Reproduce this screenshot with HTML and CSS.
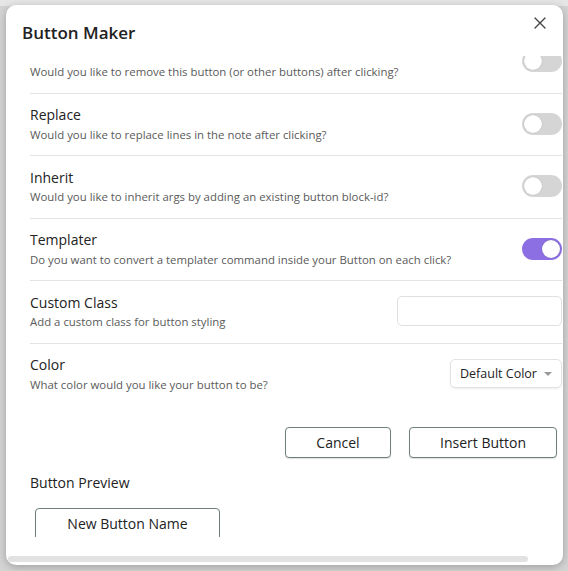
FILE: index.html
```html
<!DOCTYPE html>
<html lang="en">
<head>
<meta charset="utf-8">
<title>Button Maker</title>
<link rel="stylesheet" href="styles.css">
</head>
<body>
<div class="backdrop"></div>
<div class="modal">
  <button class="modal-close" aria-label="Close">
    <svg width="14" height="14" viewBox="0 0 14 14"><path d="M2 2 L12 12 M12 2 L2 12" stroke="#444" stroke-width="1.4" stroke-linecap="round" fill="none"/></svg>
  </button>
  <h2 class="modal-title">Button Maker</h2>
  <div class="modal-scroll">
    <div class="modal-content">
      <div class="setting-item">
        <div class="setting-info">
          <div class="setting-name"></div>
          <div class="setting-desc">Would you like to remove this button (or other buttons) after clicking?</div>
        </div>
        <div class="toggle"></div>
      </div>
      <div class="setting-item">
        <div class="setting-info">
          <div class="setting-name">Replace</div>
          <div class="setting-desc">Would you like to replace lines in the note after clicking?</div>
        </div>
        <div class="toggle"></div>
      </div>
      <div class="setting-item">
        <div class="setting-info">
          <div class="setting-name">Inherit</div>
          <div class="setting-desc">Would you like to inherit args by adding an existing button block-id?</div>
        </div>
        <div class="toggle"></div>
      </div>
      <div class="setting-item">
        <div class="setting-info">
          <div class="setting-name">Templater</div>
          <div class="setting-desc">Do you want to convert a templater command inside your Button on each click?</div>
        </div>
        <div class="toggle is-on"></div>
      </div>
      <div class="setting-item">
        <div class="setting-info">
          <div class="setting-name">Custom Class</div>
          <div class="setting-desc">Add a custom class for button styling</div>
        </div>
        <div class="text-input"></div>
      </div>
      <div class="setting-item">
        <div class="setting-info">
          <div class="setting-name">Color</div>
          <div class="setting-desc">What color would you like your button to be?</div>
        </div>
        <div class="dropdown">Default Color<span class="caret"></span></div>
      </div>
      <div class="actions">
        <button class="btn btn-cancel">Cancel</button>
        <button class="btn btn-insert">Insert Button</button>
      </div>
      <div class="preview-label">Button Preview</div>
      <div class="preview-wrap">
        <button class="btn btn-preview">New Button Name</button>
      </div>
    </div>
  </div>
  <div class="hscroll"><div class="hscroll-thumb"></div></div>
</div>
</body>
</html>
```
FILE: styles.css
```css
html, body {
  margin: 0;
  padding: 0;
}
body {
  width: 568px;
  height: 571px;
  overflow: hidden;
  background: #d9d9d9;
  font-family: "Open Sans", "Noto Sans", sans-serif;
  position: relative;
}
.backdrop {
  position: absolute;
  inset: 0;
  background: linear-gradient(#e6e6e6 0, #e6e6e6 6px, #d4d4d4 6px);
}

.modal {
  position: absolute;
  left: 6px;
  top: 5px;
  width: 557px;
  height: 560px;
  background: #fff;
  border-radius: 10px;
  box-shadow: 0 2px 8px rgba(0,0,0,0.25);
  overflow: hidden;
  display: flex;
  flex-direction: column;
}
.modal-close {
  position: absolute;
  right: 12px;
  top: 7px;
  width: 22px;
  height: 22px;
  border: 0;
  background: none;
  padding: 0;
  display: flex;
  align-items: center;
  justify-content: center;
}
.modal-title {
  margin: 0;
  padding: 17px 0 0 16px;
  height: 34px;
  font-size: 17px;
  font-weight: 600;
  line-height: 22px;
  color: #222;
}
.modal-scroll {
  height: 481px;
  overflow: hidden;
  flex: none;
}
.modal-content {
  margin-top: -26px;
  padding: 0 1px 0 24px;
}
.setting-item {
  display: flex;
  align-items: center;
  padding: 10.5px 0 11.5px;
  border-top: 1px solid #e3e3e3;
}
.setting-item:first-child {
  border-top: 1px solid transparent;
}
.setting-info {
  flex: 1;
}
.setting-name {
  font-size: 14px;
  line-height: 21px;
  height: 21px;
  color: #222;
}
.setting-desc {
  font-size: 11.4px;
  line-height: 18px;
  padding-top: 0.5px;
  color: #5a5a5a;
}
.toggle {
  width: 40px;
  height: 22px;
  border-radius: 11px;
  background: #d5d5d5;
  position: relative;
  flex: none;
}
.toggle::after {
  content: "";
  position: absolute;
  left: 2px;
  top: 2px;
  width: 18px;
  height: 18px;
  border-radius: 50%;
  background: #fff;
  box-shadow: 0 0 1px rgba(0,0,0,0.3);
}
.toggle.is-on {
  background: #8b6fe3;
}
.toggle.is-on::after {
  left: 20px;
}
.text-input {
  width: 163px;
  height: 28px;
  border: 1px solid #e0e0e0;
  border-radius: 5px;
  background: #fff;
  flex: none;
}
.dropdown {
  display: flex;
  align-items: center;
  width: 112px;
  height: 29px;
  box-sizing: border-box;
  padding-left: 9px;
  border: 1px solid #e3e3e3;
  border-radius: 5px;
  box-shadow: 0 1px 2px rgba(0,0,0,0.08);
  font-size: 12.5px;
  color: #222;
  position: relative;
  flex: none;
}
.caret {
  position: absolute;
  right: 9px;
  top: 12px;
  width: 0;
  height: 0;
  border-left: 4px solid transparent;
  border-right: 4px solid transparent;
  border-top: 4px solid #999;
}
.actions {
  display: flex;
  justify-content: flex-end;
  gap: 18px;
  padding: 22px 5px 0 0;
}
.btn {
  font-family: inherit;
  font-size: 14px;
  color: #222;
  background: #fff;
  border: 1px solid #6d8079;
  border-radius: 4px;
  height: 31px;
  padding: 0;
  box-shadow: 0 1px 1px rgba(0,0,0,0.12);
}
.btn-cancel { width: 106px; }
.btn-insert { width: 148px; }
.preview-label {
  font-size: 14px;
  line-height: 20px;
  color: #222;
  margin-top: 15px;
}
.preview-wrap {
  padding: 15px 0 0 5px;
}
.btn-preview {
  width: 183px;
  height: 30px;
  box-sizing: content-box;
  padding-bottom: 2px;
  line-height: 28px;
}
.hscroll {
  flex: none;
  height: 25px;
  position: relative;
}
.hscroll-thumb {
  position: absolute;
  left: 2px;
  top: 19px;
  width: 520px;
  height: 6px;
  border-radius: 3px;
  background: #e2e2e2;
}
```
